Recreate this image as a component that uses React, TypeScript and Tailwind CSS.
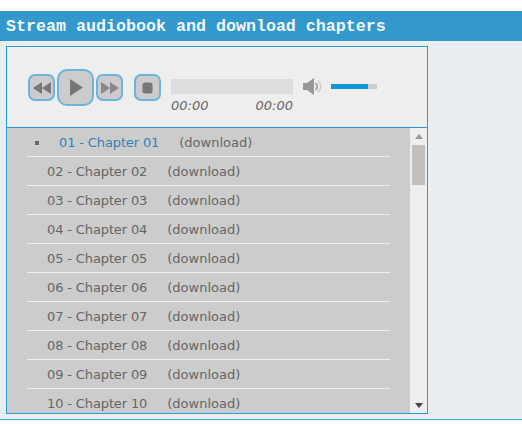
const CHAPTERS = ['01', '02', '03', '04', '05', '06', '07', '08', '09', '10'];

function PlayerButton({ large, children }: { large?: boolean; children: React.ReactNode }) {
  return (
    <div
      className={`flex items-center justify-center bg-[#cccccc] border-2 border-[#6cb4dc] ${
        large ? 'w-[37px] h-[37px] rounded-[10px]' : 'w-[27px] h-[27px] rounded-[7px]'
      }`}
    >
      {children}
    </div>
  );
}

function Player() {
  return (
    <div className="h-[81px] bg-[#eeeeee] border-b border-[#2a9bd6] flex items-start pl-[21px] pt-[22px] font-['DejaVu_Sans',sans-serif]">
      <div className="flex items-center h-[37px] gap-[2px]">
        <PlayerButton>
          <svg width="18" height="12" viewBox="0 0 18 12"><path d="M9 0v12L0 6zM18 0v12L9 6z" fill="#777" /></svg>
        </PlayerButton>
        <PlayerButton large>
          <svg width="14" height="17" viewBox="0 0 14 17"><path d="M1 0l13 8.500L1 17z" fill="#777" /></svg>
        </PlayerButton>
        <PlayerButton>
          <svg width="18" height="12" viewBox="0 0 18 12"><path d="M0 0v12l9-6zM9 0v12l9-6z" fill="#888" /></svg>
        </PlayerButton>
        <div className="ml-[9px]">
          <PlayerButton>
            <svg width="11" height="12" viewBox="0 0 11 12"><rect x="0.500" y="0.500" width="10" height="11" rx="2.500" fill="#777" /></svg>
          </PlayerButton>
        </div>
      </div>
      <div className="ml-[10px] mt-[10px] w-[122px]">
        <div className="h-[15px] bg-[#dddddd]" />
        <div className="mt-[3px] flex justify-between text-[13px] leading-[18px] italic text-[#666666]">
          <span>00:00</span>
          <span>00:00</span>
        </div>
      </div>
      <div className="ml-[10px] mt-[9px]">
        <svg width="20" height="17" viewBox="0 0 20 17">
          <path d="M0 5h4l7-5v17l-7-5H0z" fill="#999" />
          <path d="M12.500 5a4.500 4.500 0 0 1 0 7" fill="none" stroke="#aaa" strokeWidth="2" />
          <path d="M15 2.500a8 8 0 0 1 0 12" fill="none" stroke="#ccc" strokeWidth="1.500" />
        </svg>
      </div>
      <div className="ml-[8px] mt-[15px] w-[46px] h-[5px] bg-[#cccccc]">
        <div className="w-[37px] h-full bg-[#0e96d8]" />
      </div>
    </div>
  );
}

function ChapterRow({ num, current }: { num: string; current: boolean }) {
  return (
    <li className="h-[29px] ml-[20px] w-[363px] border-b border-[#eeeeee] flex items-center relative pt-px text-[13px] text-[#666666]">
      {current && <span className="absolute left-[8px] top-[13px] w-[4px] h-[4px] bg-[#666666]" />}
      <span className={current ? 'ml-[32px] tracking-[-0.13px] text-[#2e83b8]' : 'ml-[20px] tracking-[-0.13px]'}>
        {num} - Chapter {num}
      </span>
      <span className="ml-[20px]">(download)</span>
    </li>
  );
}

export default function App() {
  return (
    <div className="h-[424px] bg-white overflow-hidden pt-[11px] font-['DejaVu_Sans',sans-serif]">
      <div className="h-[30px] bg-[#3399cc] pl-[6px] text-[16.670px] leading-[31px] font-bold text-[#f4f8fa] font-['Liberation_Mono',monospace]">
        Stream audiobook and download chapters
      </div>
      <div className="h-[379px] bg-[#e8eef1] border-b border-[#48a8d0] pl-[6px] pt-[5px]">
        <div className="w-[422px] h-[368px] border border-[#2a9bd6] bg-[#eeeeee] overflow-hidden">
          <Player />
          <div className="flex h-[285px]">
            <ul className="w-[403px] bg-[#cccccc] overflow-hidden">
              {CHAPTERS.map((num, i) => (
                <ChapterRow key={num} num={num} current={i === 0} />
              ))}
            </ul>
            <div className="w-[17px] flex flex-col items-center relative">
              <svg className="mt-[6px]" width="8" height="5" viewBox="0 0 8 5"><path d="M0 5l4-5 4 5z" fill="#999" /></svg>
              <div className="mt-[6px] w-[13px] h-[40px] bg-[#c2bfbf]" />
              <svg className="absolute bottom-[5px]" width="8" height="5" viewBox="0 0 8 5"><path d="M0 0l4 5 4-5z" fill="#444" /></svg>
            </div>
          </div>
        </div>
      </div>
    </div>
  );
}
